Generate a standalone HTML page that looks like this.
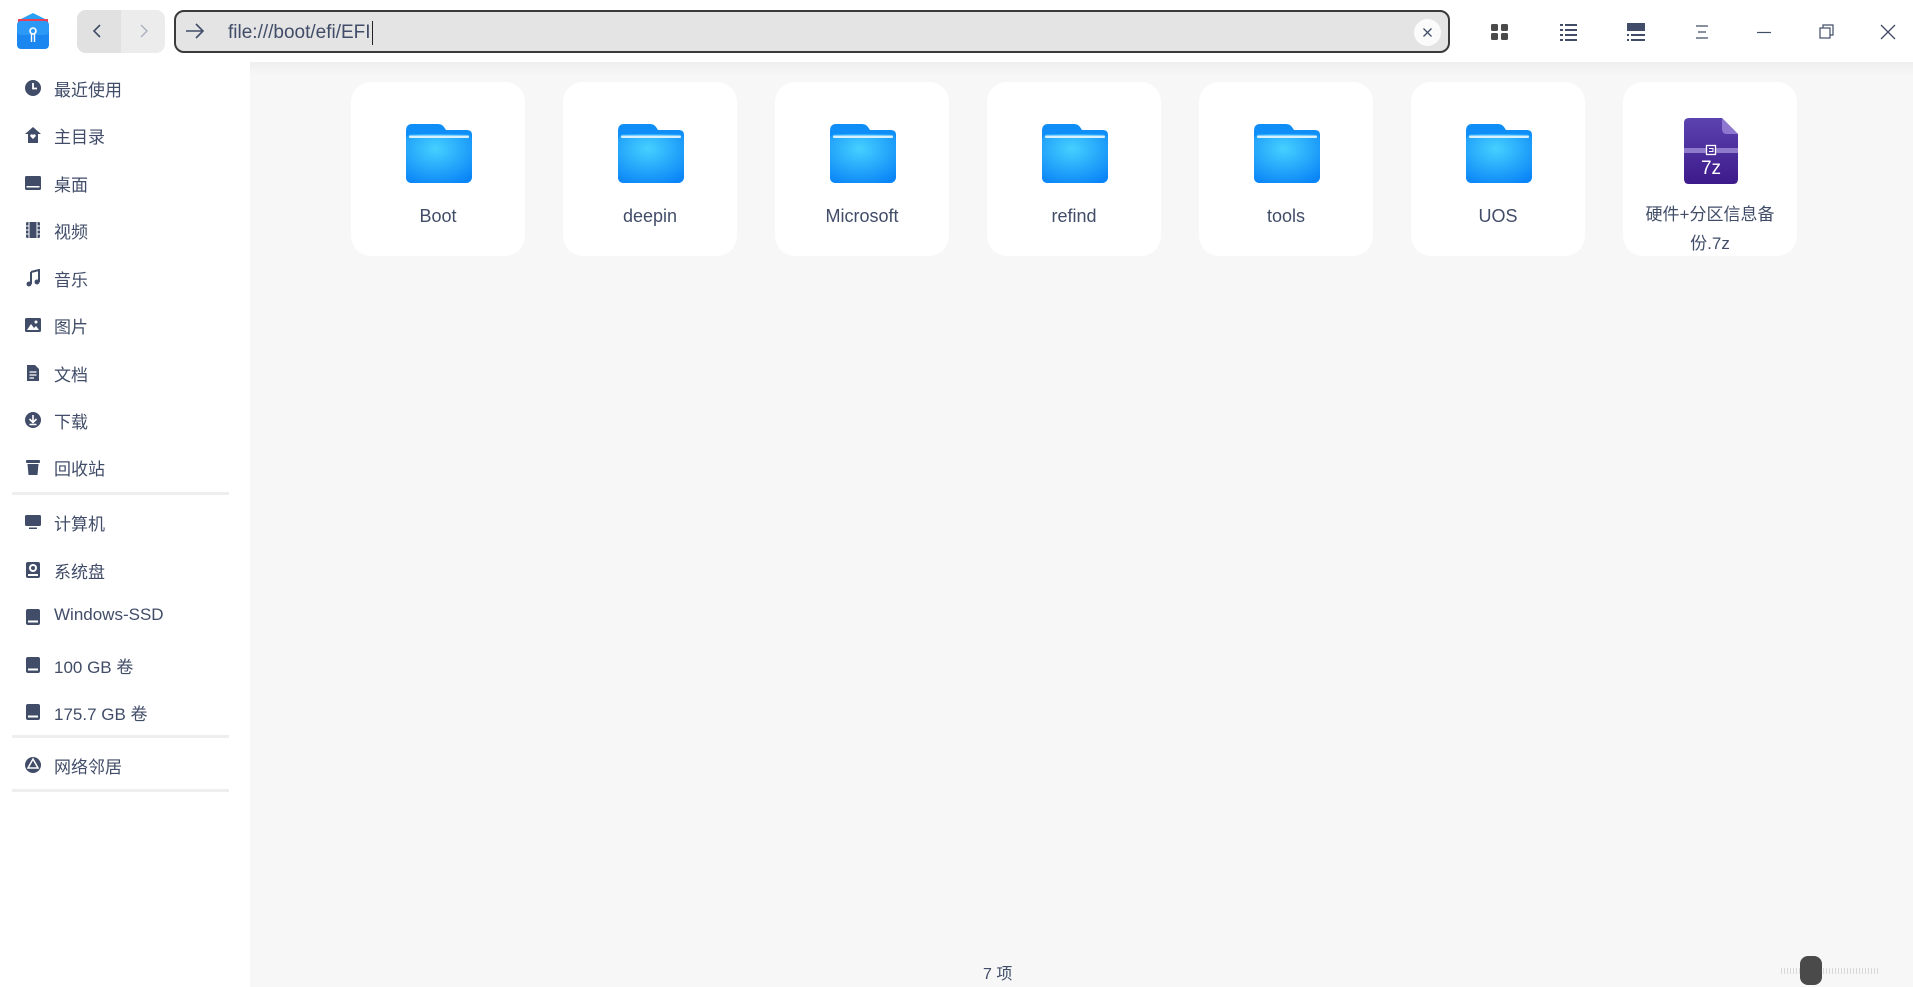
<!DOCTYPE html>
<html><head><meta charset="utf-8"><style>
*{margin:0;padding:0;box-sizing:border-box}
body{width:1913px;height:987px;overflow:hidden;background:#fff;font-family:"Liberation Sans","Noto Sans CJK SC",sans-serif;color:#414d68;position:relative}
.hdr{position:absolute;left:0;top:0;width:1913px;height:62px;background:#fff}
.side{position:absolute;left:0;top:62px;width:250px;height:925px;background:#fff}
.main{position:absolute;left:250px;top:62px;width:1663px;height:925px;background:#f7f7f7}
.main:before{content:"";position:absolute;left:0;top:0;right:0;height:14px;background:linear-gradient(#efefef,#f7f7f7)}
.item{position:absolute;left:0;height:40px;width:240px;font-size:17px;color:#414d68}
.item svg{position:absolute;left:24px;top:12px;width:18px;height:18px}
.item span{position:absolute;left:54px;top:9px;white-space:nowrap}
.div{position:absolute;left:12px;width:217px;height:3px;background:#eee}
.card{position:absolute;top:82px;width:174px;height:174px;background:#fff;border-radius:20px}
.card .lbl{position:absolute;left:0;right:0;top:120px;text-align:center;font-size:18px;color:#414d68;line-height:28px}
.folder{position:absolute;left:52px;top:41px;width:70px;height:60px}
.tb{position:absolute;top:22px}
</style></head><body>
<div class="hdr">
 <svg style="position:absolute;left:15px;top:12px" width="36" height="38" viewBox="0 0 36 38">
  <path d="M4 8 L18 1 L32 8 Z" fill="#2aa0f5"/>
  <rect x="3" y="7" width="30" height="4" fill="#e9405a"/>
  <rect x="2" y="9" width="32" height="28" rx="4" fill="#1b86f0"/>
  <rect x="2" y="9" width="32" height="14" rx="4" fill="#3aa6fb" opacity=".6"/>
  <circle cx="18" cy="19" r="3" fill="none" stroke="#fff" stroke-width="1.6"/>
  <path d="M16.5 22 V30 M19.5 22 V30" stroke="#fff" stroke-width="1.4"/>
 </svg>
 <div style="position:absolute;left:77px;top:10px;width:88px;height:43px;border-radius:9px;background:#ececec;overflow:hidden"><div style="width:44px;height:43px;background:#e1e1e1"></div></div>
 <svg style="position:absolute;left:91px;top:23px" width="14" height="16" viewBox="0 0 14 16"><path d="M9 2 L3 8 L9 14" fill="none" stroke="#414d68" stroke-width="1.6"/></svg>
 <svg style="position:absolute;left:137px;top:23px" width="14" height="16" viewBox="0 0 14 16"><path d="M4 2 L10 8 L4 14" fill="none" stroke="#a9afbb" stroke-width="1.4"/></svg>
 <div style="position:absolute;left:174px;top:10px;width:1276px;height:43px;border:2px solid #3a3a3a;border-radius:10px;background:#e4e4e4"></div>
 <svg style="position:absolute;left:184px;top:20px" width="22" height="22" viewBox="0 0 22 22"><path d="M2 11 H19 M12 4 L19 11 L12 18" fill="none" stroke="#414d68" stroke-width="1.6"/></svg>
 <div style="position:absolute;left:228px;top:21px;font-size:19px;color:#414d68;line-height:24px">file:///boot/efi/EFI<span style="display:inline-block;width:1px;height:24px;background:#222;vertical-align:top;margin-left:1px"></span></div>
 <div style="position:absolute;left:1414px;top:19px;width:27px;height:27px;border-radius:50%;background:#fbfbfb"></div>
 <svg style="position:absolute;left:1422px;top:27px" width="11" height="11" viewBox="0 0 11 11"><path d="M1.5 1.5 L9.5 9.5 M9.5 1.5 L1.5 9.5" stroke="#414d68" stroke-width="1.3"/></svg>
 <svg class="tb" style="left:1490px" width="20" height="20" viewBox="0 0 20 20" fill="#4a4a4a"><rect x="1" y="2" width="7" height="7" rx="1.5"/><rect x="11" y="2" width="7" height="7" rx="1.5"/><rect x="1" y="11" width="7" height="7" rx="1.5"/><rect x="11" y="11" width="7" height="7" rx="1.5"/></svg>
 <svg class="tb" style="left:1559px" width="20" height="20" viewBox="0 0 20 20" fill="#414d68"><rect x="1" y="2" width="3" height="2"/><rect x="6" y="2" width="12" height="2"/><rect x="1" y="7" width="3" height="2"/><rect x="6" y="7" width="12" height="2"/><rect x="1" y="12" width="3" height="2"/><rect x="6" y="12" width="12" height="2"/><rect x="1" y="17" width="3" height="2"/><rect x="6" y="17" width="12" height="2"/></svg>
 <svg class="tb" style="left:1626px" width="20" height="20" viewBox="0 0 20 20" fill="#414d68"><rect x="1" y="1" width="18" height="8"/><rect x="1" y="12" width="2" height="2"/><rect x="5" y="12" width="14" height="2"/><rect x="1" y="17" width="2" height="2"/><rect x="5" y="17" width="14" height="2"/></svg>
 <svg class="tb" style="left:1694px" width="16" height="20" viewBox="0 0 16 20" fill="none" stroke="#414d68" stroke-width="1.2"><path d="M2 4 H14 M4 10 H12 M2 16 H14"/></svg>
 <svg class="tb" style="left:1755px" width="18" height="20" viewBox="0 0 18 20"><path d="M2 10.5 H16" stroke="#414d68" stroke-width="1.2"/></svg>
 <svg class="tb" style="left:1817px" width="18" height="20" viewBox="0 0 18 20" fill="none" stroke="#414d68" stroke-width="1.2"><rect x="3" y="6" width="10" height="10"/><path d="M6 6 V3 H16 V13 H13"/></svg>
 <svg class="tb" style="left:1878px" width="20" height="20" viewBox="0 0 20 20"><path d="M3 3 L17 17 M17 3 L3 17" stroke="#414d68" stroke-width="1.3"/></svg>
</div>
<div class="side">
 <div class="item" style="top:5px"><svg viewBox="0 0 18 18"><circle cx="9" cy="9" r="8" fill="#414d68"/><path d="M9 4 V9.5 H13" stroke="#fff" stroke-width="1.8" fill="none"/></svg><span>最近使用</span></div>
 <div class="item" style="top:52px"><svg viewBox="0 0 18 18"><path d="M9 1 L17 8 H14 V17 H4 V8 H1 Z" fill="#414d68"/><path d="M9 13 L6.5 10.5 A1.4 1.4 0 0 1 9 9 A1.4 1.4 0 0 1 11.5 10.5 Z" fill="#fff"/></svg><span>主目录</span></div>
 <div class="item" style="top:100px"><svg viewBox="0 0 18 18"><rect x="1" y="2" width="16" height="14" rx="1.5" fill="#414d68"/><rect x="2.5" y="12" width="13" height="1.5" fill="#fff"/></svg><span>桌面</span></div>
 <div class="item" style="top:147px"><svg viewBox="0 0 18 18"><rect x="2" y="1" width="14" height="16" rx="1.5" fill="#414d68"/><path d="M5 1 V17 M13 1 V17" stroke="#fff" stroke-width="1"/><path d="M2 5 H5 M2 9 H5 M2 13 H5 M13 5 H16 M13 9 H16 M13 13 H16" stroke="#fff" stroke-width="1"/></svg><span>视频</span></div>
 <div class="item" style="top:195px"><svg viewBox="0 0 18 18"><path d="M7 3 L15 1 V13" fill="none" stroke="#414d68" stroke-width="2"/><path d="M7 3 V15" stroke="#414d68" stroke-width="2"/><circle cx="5" cy="15" r="2.5" fill="#414d68"/><circle cx="13" cy="13" r="2.5" fill="#414d68"/></svg><span>音乐</span></div>
 <div class="item" style="top:242px"><svg viewBox="0 0 18 18"><rect x="1" y="2" width="16" height="14" rx="1.5" fill="#414d68"/><path d="M3 14 L7 8 L10 12 L12 10 L15 14 Z" fill="#fff"/><circle cx="12" cy="6" r="1.5" fill="#fff"/></svg><span>图片</span></div>
 <div class="item" style="top:290px"><svg viewBox="0 0 18 18"><path d="M3 1 H11 L15 5 V17 H3 Z" fill="#414d68"/><path d="M5.5 8 H12.5 M5.5 11 H12.5 M5.5 14 H10" stroke="#fff" stroke-width="1.2"/></svg><span>文档</span></div>
 <div class="item" style="top:337px"><svg viewBox="0 0 18 18"><circle cx="9" cy="9" r="8" fill="#414d68"/><path d="M9 4 V11 M5.5 8 L9 11.5 L12.5 8 M5.5 13.5 H12.5" stroke="#fff" stroke-width="1.6" fill="none"/></svg><span>下载</span></div>
 <div class="item" style="top:384px"><svg viewBox="0 0 18 18"><rect x="2" y="2" width="14" height="3" rx="1" fill="#414d68"/><path d="M3.5 6 H14.5 L13.5 17 H4.5 Z" fill="#414d68"/></svg><span>回收站</span></div>
 <div class="div" style="top:430px"></div>
 <div class="item" style="top:439px"><svg viewBox="0 0 18 18"><rect x="1" y="2" width="16" height="11" rx="1.5" fill="#414d68"/><rect x="5" y="14.5" width="8" height="1.5" fill="#414d68"/></svg><span>计算机</span></div>
 <div class="item" style="top:487px"><svg viewBox="0 0 18 18"><rect x="2" y="1" width="14" height="16" rx="2" fill="#414d68"/><circle cx="9" cy="7" r="4" fill="#fff"/><circle cx="9" cy="7" r="2" fill="#414d68"/><rect x="4" y="13" width="10" height="2" fill="#fff"/></svg><span>系统盘</span></div>
 <div class="item" style="top:534px"><svg viewBox="0 0 18 18"><rect x="2" y="1" width="14" height="16" rx="2" fill="#414d68"/><rect x="4" y="12.5" width="10" height="2" fill="#fff"/></svg><span>Windows-SSD</span></div>
 <div class="item" style="top:582px"><svg viewBox="0 0 18 18"><rect x="2" y="1" width="14" height="16" rx="2" fill="#414d68"/><rect x="4" y="12.5" width="10" height="2" fill="#fff"/></svg><span>100 GB 卷</span></div>
 <div class="item" style="top:629px"><svg viewBox="0 0 18 18"><rect x="2" y="1" width="14" height="16" rx="2" fill="#414d68"/><rect x="4" y="12.5" width="10" height="2" fill="#fff"/></svg><span>175.7 GB 卷</span></div>
 <div class="div" style="top:673px"></div>
 <div class="item" style="top:682px"><svg viewBox="0 0 18 18"><circle cx="9" cy="9" r="8" fill="#414d68"/><path d="M9 3 L14 12 H4 Z" fill="none" stroke="#fff" stroke-width="1.5"/></svg><span>网络邻居</span></div>
 <div class="div" style="top:727px"></div>
</div>
<div class="main">
 <svg width="0" height="0" style="position:absolute"><defs>
  <radialGradient id="fg" cx="0.45" cy="0.3" r="0.8"><stop offset="0" stop-color="#45d0ff"/><stop offset="1" stop-color="#0a84f7"/></radialGradient>
  <linearGradient id="zg" x1="0" y1="0" x2="0" y2="1"><stop offset="0" stop-color="#5b43b0"/><stop offset="1" stop-color="#3e1a8a"/></linearGradient>
 </defs></svg>
</div>
<div id="cards"></div>
<script>
var names=["Boot","deepin","Microsoft","refind","tools","UOS"];
var h="";
names.forEach(function(n,i){
 h+='<div class="card" style="left:'+(351+212*i)+'px"><svg class="folder" viewBox="0 0 70 60"><path d="M3 8 Q3 1 9 1 H35 Q39 1 41 4 L43 7 H64 Q69 7 69 12 V53 Q69 60 62 60 H9 Q3 60 3 54 Z" fill="#0f8ef8"/><rect x="3" y="11" width="66" height="49" rx="6" fill="url(#fg)"/><rect x="6" y="12.5" width="60" height="2.5" rx="1" fill="#d8f1ff"/></svg><div class="lbl">'+n+'</div></div>';
});
h+='<div class="card" style="left:1623px"><svg style="position:absolute;left:60px;top:35px" width="56" height="68" viewBox="0 0 56 68"><path d="M6 1 H39 L55 17 V62 Q55 67 50 67 H6 Q1 67 1 62 V6 Q1 1 6 1 Z" fill="url(#zg)"/><path d="M39 1 V12 Q39 17 44 17 H55 Z" fill="#8d77d0"/><rect x="1" y="31" width="54" height="5" fill="#a08ed6" opacity=".8"/><rect x="23.5" y="28.5" width="9" height="9" fill="#4b2a9a" stroke="#fff" stroke-width="1.3"/><path d="M26 31.5 H30 V34.5 H26" fill="none" stroke="#fff" stroke-width="1"/><text x="28" y="57" text-anchor="middle" font-family="Liberation Sans,sans-serif" font-size="19" fill="#fff">7z</text></svg><div class="lbl" style="top:118px;font-size:17px;line-height:29px">硬件+分区信息备<br>份.7z</div></div>';
document.getElementById("cards").innerHTML=h;
</script>
<div style="position:absolute;left:983px;top:960px;font-size:16px;color:#414d68">7 项</div>
<div style="position:absolute;left:1781px;top:968px;width:98px;height:6px;background:repeating-linear-gradient(90deg,#d8d8d8 0 1px,transparent 1px 3px)"></div>
<div style="position:absolute;left:1800px;top:956px;width:22px;height:29px;border-radius:8px;background:#4a4a4a"></div>
</body></html>
